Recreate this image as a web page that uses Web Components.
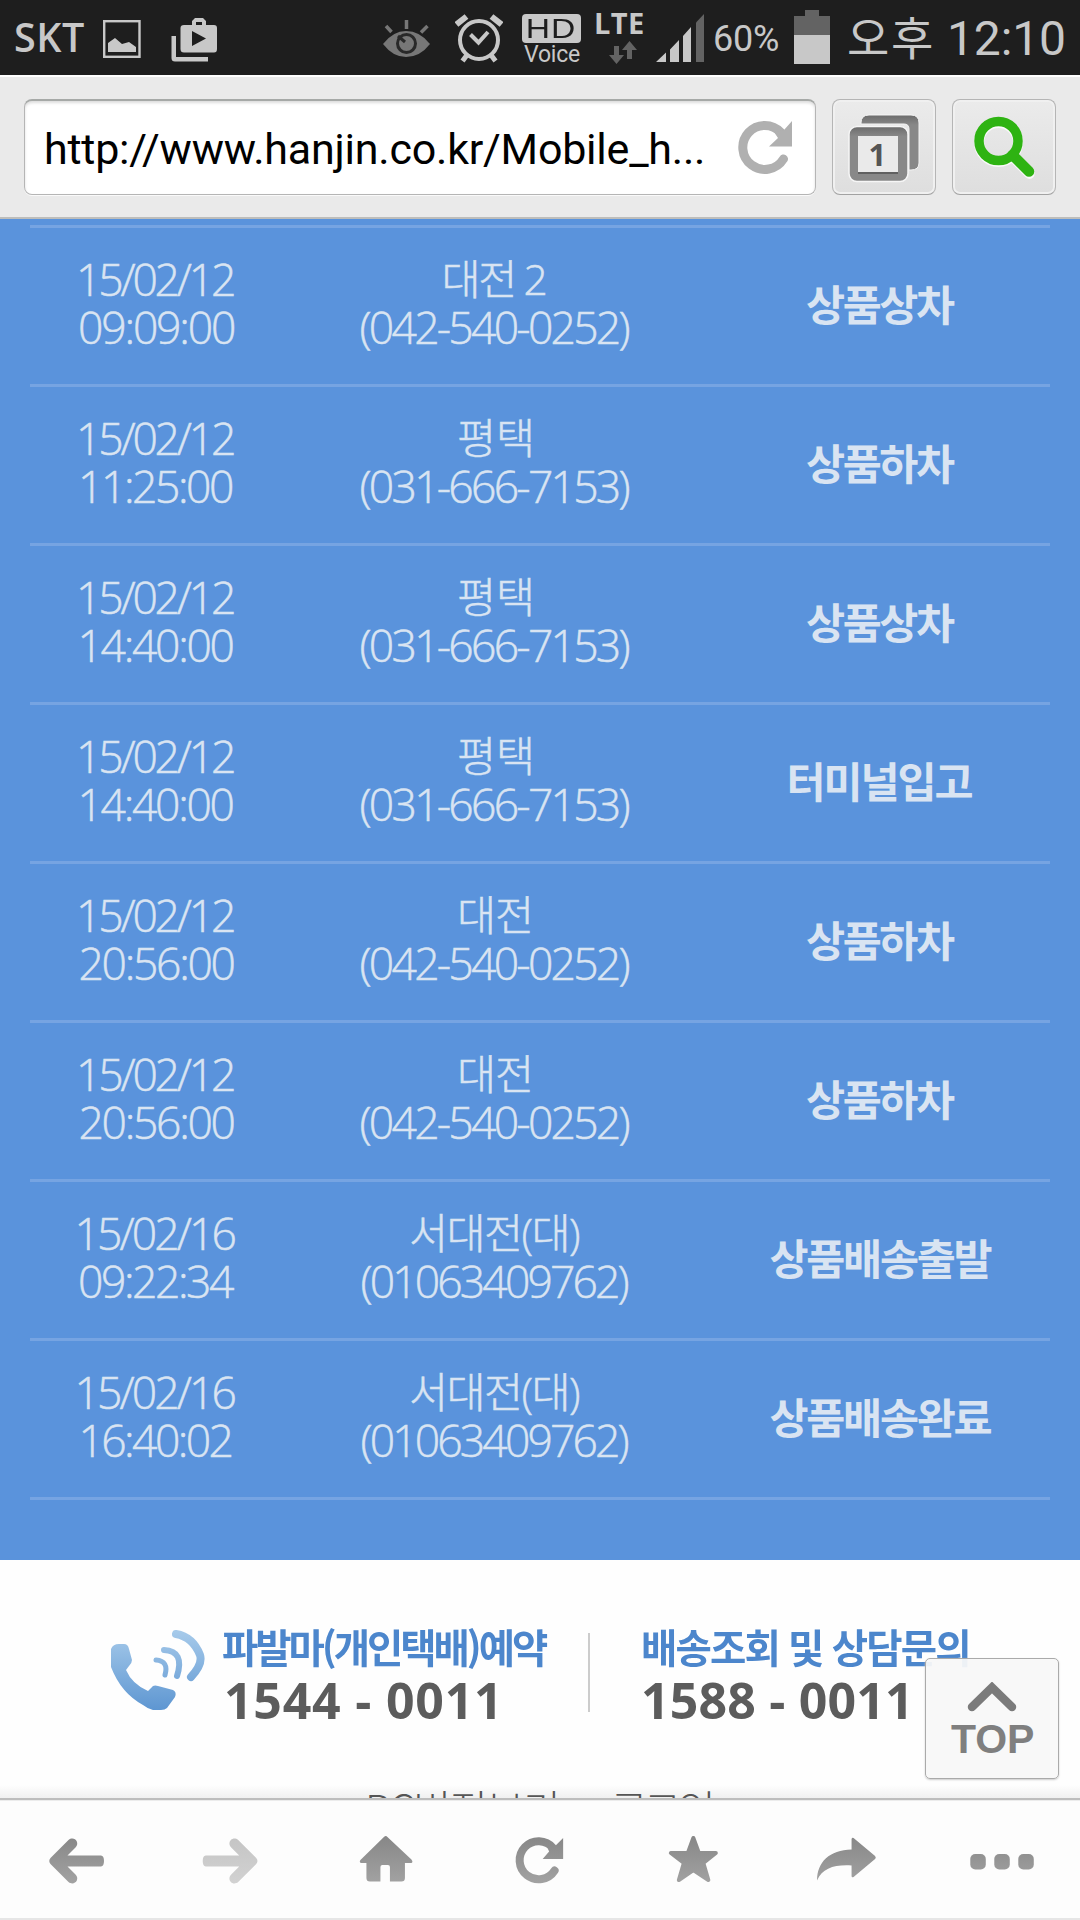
<!DOCTYPE html>
<html lang="ko">
<head>
<meta charset="utf-8">
<title>배송조회</title>
<style>
html,body{margin:0;padding:0;background:#fff}
body{width:1080px;height:1920px;overflow:hidden;font-family:"Open Sans","Noto Sans CJK KR",sans-serif}
</style>
</head>
<body>
<tracking-screen></tracking-screen>
<script>
const OPEN='"Open Sans","Noto Sans CJK KR",sans-serif';
const KR='"Noto Sans CJK KR",sans-serif';
const ROBOTO='Roboto,"Noto Sans CJK KR",sans-serif';
const ctx=document.createElement('canvas').getContext('2d');

/* One line of text whose ink is spread over the width "w" by letter spacing. */
class FitText extends HTMLElement{
  connectedCallback(){
    const a=n=>this.getAttribute(n);
    const fam={open:OPEN,kr:KR,roboto:ROBOTO,lib:'"Liberation Sans",sans-serif'}[a('face')||'open'];
    const size=+a('size'),weight=a('weight')||400,w=+a('w'),lh=a('lh')||48;
    const text=this.textContent;
    ctx.font=`${weight} ${size}px ${fam}`;
    const m=ctx.measureText(text);
    const ink=m.actualBoundingBoxLeft+m.actualBoundingBoxRight;
    const ls=(w-ink)/(text.length-1);
    this.attachShadow({mode:'open'}).innerHTML=`<style>
      :host{display:block;flex:none;width:${w}px;height:${lh}px;line-height:${lh}px;white-space:pre;
        font-family:${fam.replace(/"/g,"'")};font-size:${size}px;font-weight:${weight};letter-spacing:${ls}px}
      span{display:block;margin-left:${m.actualBoundingBoxLeft}px;width:max-content}
    </style><span><slot></slot></span>`;
  }
}
customElements.define('fit-text',FitText);

class StatusBar extends HTMLElement{
  constructor(){super();this.attachShadow({mode:'open'}).innerHTML=`<style>
    :host{display:flex;height:75px;background:#1e1e1e;color:#c8c8c8;align-items:flex-start}
    svg{display:block;flex:none}
    .hd{margin-left:19px;width:59px;padding-top:14px}
    .badge{height:29px;border-radius:4px;background:#c8c8c8;color:#1e1e1e;padding-left:6px}
    .badge fit-text{transform:scaleX(1.18);transform-origin:0 0}
    .voice{margin:-1px 0 0 2px}
    .lte{margin-left:15px;padding-top:4px;width:48px}
    .lte svg{margin:0 0 0 12px}
  </style>
  <fit-text style="margin-left:15px" size="39.5" weight="600" w="69" lh="75">SKT</fit-text>
  <svg style="margin-left:19px" width="38" height="75" viewBox="103 0 38 75"><rect x="104.2" y="21.2" width="35.3" height="35.6" fill="none" stroke="#c8c8c8" stroke-width="2.4"/><path d="M108 52V43L115 38L122 44L129 42L136 47V52Z" fill="#c8c8c8"/></svg>
  <svg style="margin-left:30px" width="47" height="75" viewBox="171 0 47 75" fill="#c8c8c8"><path d="M171.500 36H176V57H208V61.500H175Q171.500 61.500 171.500 58Z"/><path fill-rule="evenodd" d="M184 25H192V21L195 18H203L206 21V25H214Q217 25 217 28V49Q217 52.500 214 52.500H184Q180.500 52.500 180.500 49V28Q180.500 25 184 25ZM196 25H202V22H196ZM192 31V46L206 38.500Z"/></svg>
  <svg style="margin-left:165px" width="47" height="75" viewBox="383 0 47 75"><path d="M383 44Q393 31 406 31Q420 31 430 44Q420 57 406 57Q393 57 383 44Z" fill="#777"/><circle cx="406.500" cy="43.500" r="9" fill="#777" stroke="#292929" stroke-width="3"/><circle cx="406.500" cy="43.500" r="4.500" fill="#777"/><path d="M398 36L405 42" stroke="#292929" stroke-width="3"/><path d="M406.500 20V29M386 26L391.500 32M427.500 26L421 32.500" stroke="#777" stroke-width="3.500"/></svg>
  <svg style="margin-left:25px" width="48" height="75" viewBox="455 0 48 75" fill="none" stroke="#c8c8c8"><circle cx="479" cy="40" r="19" stroke-width="4"/><path d="M456.500 24.500L466.500 16.500M501.500 24.500L491.500 16.500" stroke-width="6"/><path d="M467 55L462.500 61M491 55L495.500 61" stroke-width="5"/><path d="M470.500 34.500L478.500 42.500L488 32" stroke-width="4"/></svg>
  <div class="hd"><div class="badge"><fit-text face="lib" size="28.500" w="39.500" lh="29">HD</fit-text></div>
  <fit-text class="voice" face="roboto" weight="400" size="23" w="56" lh="26">Voice</fit-text></div>
  <div class="lte"><fit-text weight="700" size="29" w="47" lh="37">LTE</fit-text>
  <svg width="30" height="24" viewBox="608 41 30 24" fill="#636363"><path d="M614 46H619V55H624L616.500 64L609 55H614ZM627 59V50H622L629.500 41L637 50H632V59Z"/></svg></div>
  <svg style="margin-left:12px" width="49" height="75" viewBox="656 0 49 75" fill="#c8c8c8"><path d="M656 62L666 52.500V62ZM670 62V49.500L679 40V62ZM683 62V36L691 27V62Z"/><path fill="#636363" d="M696 62V22.500L704 14V62Z"/></svg>
  <fit-text style="margin-left:10px" face="roboto" size="36" w="63" lh="79">60%</fit-text>
  <svg style="margin-left:16px" width="36" height="75" viewBox="794 0 36 75"><path d="M794 16H805V10H819V16H830V35H794Z" fill="#636363"/><path d="M794 35H830V64H794Z" fill="#c8c8c8"/></svg>
  <fit-text style="margin-left:19px" face="kr" weight="400" size="46" w="83" lh="71">오후</fit-text>
  <fit-text style="margin-left:19px" face="roboto" size="48" w="113" lh="77">12:10</fit-text>`}
}
customElements.define('status-bar',StatusBar);

class AddressBar extends HTMLElement{
  constructor(){super();this.attachShadow({mode:'open'}).innerHTML=`<style>
    :host{display:flex;box-sizing:border-box;height:144px;padding:22px 24px 0;background:#eaeaea;border-top:2px solid #fff;border-bottom:2px solid #bdbdbb;gap:16px;align-items:flex-start}
    .url,.btn{box-sizing:border-box;height:96px;border:1.500px solid #b5b5b5;border-radius:8px;flex:none}
    .url{width:792px;display:flex;background:#fff;color:#000;border-top:2px solid #a6a9a7;box-shadow:inset 0 2px 3px #ddd,0 1px #fafafa;padding-left:21px}
    .url svg{margin-left:34px}
    .btn{width:104px;background:linear-gradient(#ebebeb,#dedede);box-shadow:inset 0 0 0 2px #f0f0f0;border-bottom-color:#a2a2a2}
    svg{display:block;margin-top:-1px}
    text{font:700 31px "Open Sans",sans-serif}
  </style>
  <div class="url"><fit-text face="roboto" size="43" w="656" lh="96">http://www.hanjin.co.kr/Mobile_h...</fit-text>
  <svg width="58" height="96" viewBox="736 99 58 96"><path d="M783.500 158A22 22 0 1 1 781 131.500" fill="none" stroke="#b0b0b0" stroke-width="9" stroke-linecap="round"/><path d="M792 120V145.500H769L778 137L774 131L784 129Z" fill="#b0b0b0"/></svg></div>
  <div class="btn"><svg width="101" height="96" viewBox="833 99 101 96"><defs><linearGradient id="g" x2="0" y2="1"><stop stop-color="#6b6b6b"/><stop offset=".18" stop-color="#888"/></linearGradient></defs>
  <path d="M861 124V123Q861 115 869 115H911Q919 115 919 123V163Q919 170 911 170H909V129Q909 124 904 124Z" fill="url(#g)" stroke="#f4f4f4" stroke-width="1"/><rect x="849" y="126.500" width="59" height="55" rx="8" fill="url(#g)" stroke="#f6f6f6" stroke-width="1.500"/><path d="M858 136H898V172H858Z" fill="#eaeaea"/><path d="M858 172H898V174H858Z" fill="#606060"/><text x="868.500" y="166" fill="#555">1</text></svg></div>
  <div class="btn"><svg width="101" height="96" viewBox="952.500 99 101 96"><g fill="none" stroke="#fafafa"><circle cx="998" cy="142.500" r="19.500" stroke-width="10"/><path d="M1012 157L1029 174" stroke-width="10" stroke-linecap="round"/></g><g fill="none" stroke="#2eb312"><path d="M1012 155L1028.500 171.500" stroke-width="10.500" stroke-linecap="round"/><circle cx="998" cy="141" r="19.500" stroke-width="9.500"/></g></svg></div>`}
}
customElements.define('address-bar',AddressBar);

class TrackRow extends HTMLElement{
  connectedCallback(){
    const [d,dw,t,tw,p,pw,n,nw,s,sw]=this.getAttribute('data').split('|');
    const f=(x,w,z=44.5)=>`<fit-text weight="300" size="${z}" w="${w}" lh="48">${x}</fit-text>`;
    this.attachShadow({mode:'open'}).innerHTML=`<style>
    :host{display:flex;box-sizing:border-box;height:159px;border-top:3px solid #76a4e2;color:#d9e4f2}
    div{display:flex;flex-direction:column;align-items:center;padding-top:27px}
    .d,.p{-webkit-text-stroke:.5px #d9e4f2}
    .d{width:254px}.p{width:422px}.s{flex:1;padding:50px 0 0 6px}
    </style><div class="d">${f(d,dw)}${f(t,tw)}</div><div class="p">${f(p,pw,42.5)}${f(n,nw)}</div>
    <div class="s"><fit-text face="kr" weight="700" size="42.500" w="${sw}" lh="49">${s}</fit-text></div>`;
  }
}
customElements.define('track-row',TrackRow);

class TrackList extends HTMLElement{
  constructor(){super();
    const A='대전|70|(042-540-0252)|269',B='평택|72|(031-666-7153)|269',C='서대전(대)|168|(01063409762)|267';
    const rows=['15/02/12|154|09:09:00|154|대전 2|101|(042-540-0252)|269|상품상차|148','15/02/12|154|11:25:00|150|'+B+'|상품하차|148','15/02/12|154|14:40:00|151|'+B+'|상품상차|148','15/02/12|154|14:40:00|151|'+B+'|터미널입고|183','15/02/12|154|20:56:00|153|'+A+'|상품하차|148','15/02/12|154|20:56:00|153|'+A+'|상품하차|148','15/02/16|157|09:22:34|154|'+C+'|상품배송출발|221','15/02/16|157|16:40:02|149|'+C+'|상품배송완료|221'];
    this.attachShadow({mode:'open'}).innerHTML=`<style>
    :host{display:flex;flex-direction:column;box-sizing:border-box;height:1341px;padding:6px 30px 0;background:#5a93dc}
    .end{height:3px;background:#76a4e2}</style>${rows.map(r=>`<track-row data="${r}"></track-row>`).join('')}<div class="end"></div>`}
}
customElements.define('track-list',TrackList);

class ContactPanel extends HTMLElement{
  constructor(){super();this.attachShadow({mode:'open'}).innerHTML=`<style>
    :host{display:flex;flex-direction:column;height:238px;overflow:hidden;background:linear-gradient(#fefefe 0 225px,#f0f0f0 238px);position:relative}
    .main{flex:none;display:flex;padding:61px 0 0 111px;height:161px;align-items:flex-start;color:#5c5c5c;filter:blur(.6px)}
    .main svg{margin-top:7px}
    .title{color:#4c86cc}
    .rule{width:2px;height:79px;background:#ccc;margin:12px 53px 0 39px}
    .links{flex:none;display:flex;padding-left:369px;gap:57px;color:#555}
    .top{position:absolute;left:925px;top:98px;width:132px;height:119px;border:1.500px solid #aaa;border-radius:5px;background:rgba(248,248,248,.94);box-shadow:0 1px 2px #ccc;color:#7f7f7f;display:flex;flex-direction:column;align-items:center}
    .top svg{margin-top:23px;flex:none}
  </style>
  <div class="main"><svg width="94" height="84" viewBox="111 1628 94 84"><defs><linearGradient id="p" x1="0" y1="1628" x2="0" y2="1712" gradientUnits="userSpaceOnUse"><stop stop-color="#a9cceb"/><stop offset="1" stop-color="#5c95d1"/></linearGradient></defs>
  <path fill="url(#p)" d="M111 1649Q113 1644 119 1644H124Q128 1644 129 1649L132 1660Q132 1663 129 1666L126 1670Q132 1684 148 1691L153 1686Q155 1685 158 1686L173 1690Q177 1692 175 1697L167 1708Q165 1710 161 1710H153Q148 1709 143 1705Q121 1693 111 1667Z"/>
  <g fill="none" stroke="url(#p)" stroke-linecap="round"><path d="M176 1634Q193 1637 200 1655Q203 1664 191 1677" stroke-width="8"/><path d="M164 1650Q185 1651 177 1676" stroke-width="6"/><path d="M156 1660Q169 1661 165 1675" stroke-width="5"/></g></svg>
  <div style="margin-left:18px"><fit-text class="title" face="kr" weight="700" size="39.5" w="325" lh="49">파발마(개인택배)예약</fit-text><fit-text style="margin-left:3px" weight="700" size="50" w="269" lh="61">1544 - 0011</fit-text></div>
  <div class="rule" style="margin-left:40px"></div>
  <div><fit-text class="title" face="kr" weight="700" size="39.5" w="321" lh="49">배송조회 및 상담문의</fit-text><fit-text weight="700" size="50" w="263" lh="61">1588 - 0011</fit-text></div></div>
  <div class="links"><fit-text face="kr" weight="300" size="41" w="186" lh="50">PC버전보기</fit-text><fit-text face="kr" weight="300" size="41" w="100" lh="50">로그인</fit-text></div>
  <div class="top"><svg width="50" height="32" viewBox="968 1682 50 32"><path d="M973 1707L993 1687.500L1013 1707" fill="none" stroke="#7b7b7b" stroke-width="8.500" stroke-linecap="round"/></svg><fit-text face="lib" weight="700" size="41" w="82" lh="50">TOP</fit-text></div>`}
}
customElements.define('contact-panel',ContactPanel);

class NavBar extends HTMLElement{
  constructor(){super();
    const arrow='M101 1855.500H67.500L75.500 1847.500C80.500 1842.500 74 1835.500 68.500 1840L50.500 1858Q48 1861 50.500 1864L68.500 1882C74 1886.500 80.500 1879.500 75.500 1874.500L67.500 1866.500H101Q104 1866 104 1861Q104 1856 101 1855.500Z';
    const icons=[
    `<path fill="url(#n)" d="${arrow}"/>`,
    `<path opacity=".48" fill="url(#n)" transform="translate(307 0) scale(-1 1)" d="${arrow}"/>`,
    '<path fill="url(#n)" d="M383.500 1837Q385.500 1835 387 1837L411 1859.500Q413 1862 411 1863H404.500V1878Q404.500 1881.500 401 1881.500H389.500V1867Q389.500 1865 387.500 1865H382Q380 1865 380 1867V1881.500H369.500Q366 1881.500 366 1878V1863H360.500Q358.500 1862 360 1860Z"/>',
    '<path d="M554.500 1870.500A19 19 0 1 1 553 1848" fill="none" stroke="url(#n)" stroke-width="8" stroke-linecap="round"/><path fill="url(#n)" d="M563 1838V1859H542.500L549 1851.500L546 1845L555 1846Z"/>',
    '<path fill="url(#n)" stroke="url(#n)" stroke-width="4" stroke-linejoin="round" d="M693.500 1838L699 1853H716L703.500 1863L708.500 1880L693.500 1870L679 1880L684 1863L671 1853H688Z"/>',
    '<path fill="url(#n)" d="M817.500 1880.500C817.500 1862 830 1850 852 1849.500V1839Q852.500 1837 854 1838L875.500 1856Q877 1858 875.500 1859L854 1877Q852 1878 852 1876V1865.500C835 1864.500 823 1868 817.500 1880.500Z"/>',
    '<g fill="url(#n)"><rect x="970" y="1854" width="15.500" height="15.500" rx="5"/><rect x="994" y="1854" width="15.500" height="15.500" rx="5"/><rect x="1018" y="1854" width="15.500" height="15.500" rx="5"/></g>'];
    const W=1080/7;
    this.attachShadow({mode:'open'}).innerHTML=`<style>:host{display:flex;box-sizing:border-box;height:122px;background:#fdfdfd;border-top:2px solid #bdbdbd;border-bottom:2px solid #e6e6e6;box-shadow:inset 0 1px #ececec}
    svg{display:block;flex:1;width:0;height:118px}</style>${icons.map((s,i)=>`<svg viewBox="${W*i} 1800 ${W} 118"><defs><linearGradient id="n" gradientUnits="userSpaceOnUse" x1="0" y1="1838" x2="0" y2="1883"><stop stop-color="#888"/><stop offset="1" stop-color="#a2a2a2"/></linearGradient></defs>${s}</svg>`).join('')}`}
}
customElements.define('nav-bar',NavBar);

class TrackingScreen extends HTMLElement{
  constructor(){super();this.attachShadow({mode:'open'}).innerHTML=`<style>:host{display:flex;flex-direction:column;width:1080px;height:1920px;overflow:hidden}</style>
  <status-bar></status-bar><address-bar></address-bar><track-list></track-list><contact-panel></contact-panel><nav-bar></nav-bar>`}
}
customElements.define('tracking-screen',TrackingScreen);
</script>
</body>
</html>
